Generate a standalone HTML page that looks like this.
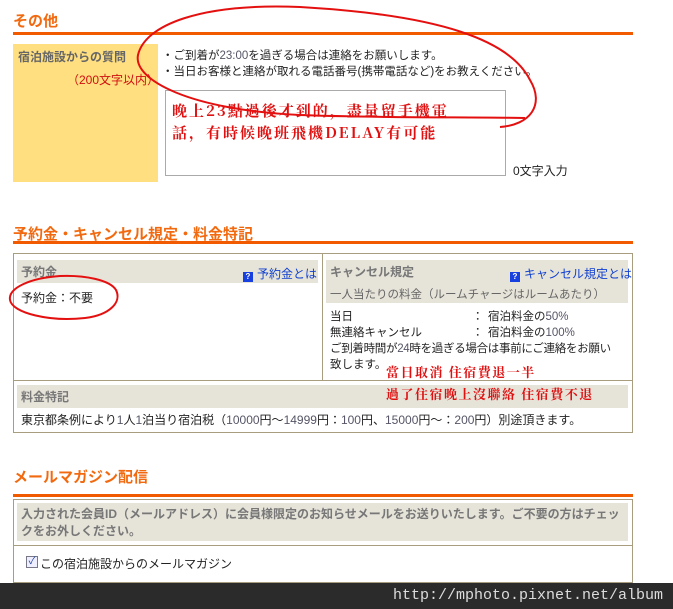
<!DOCTYPE html>
<html><head><meta charset="utf-8"><style>
body{margin:0;width:673px;height:609px;background:#fff;position:relative;overflow:hidden;font-family:"Liberation Sans","Noto Sans CJK JP",sans-serif;font-size:12px;color:#222}
.a{position:absolute}
.t{font-weight:bold;color:#f26a10;font-size:15px}
.ln{height:3px;background:#f25a00;left:13px;width:620px}
.gr{background:#e6e3d9;color:#666;font-weight:bold}
.bl{color:#1040d0}
.nb{color:#556}
.q{display:inline-block;width:10px;height:10px;background:#1840e0;color:#fff;font-size:8px;line-height:10px;text-align:center;font-weight:bold;margin-right:4px;vertical-align:-1px}
.red{color:#e01010;font-family:"Noto Serif CJK SC","Liberation Serif",serif;font-weight:bold}
</style></head><body>
<div class="a t" style="left:13px;top:10px">その他</div>
<div class="a ln" style="top:32px"></div>
<div class="a" style="left:13px;top:44px;width:145px;height:138px;background:#ffdf80"></div>
<div class="a" style="left:18px;top:48px;color:#666;font-weight:bold">宿泊施設からの質問</div>
<div class="a" style="left:67px;top:71px;color:#d01010">（200文字以内）</div>
<div class="a" style="left:162px;top:48px;line-height:16px;font-size:11.5px">・ご到着が<span class="nb">23:00</span>を過ぎる場合は連絡をお願いします。<br>・当日お客様と連絡が取れる電話番号(携帯電話など)をお教えください。</div>
<div class="a" style="left:165px;top:90px;width:339px;height:84px;border:1px solid #aaa"></div>
<div class="a red" style="left:172px;top:100px;font-size:15px;line-height:22px;letter-spacing:2px">晚上23點過後才到的，盡量留手機電<br>話，有時候晚班飛機DELAY有可能</div>
<div class="a" style="left:513px;top:162px">0文字入力</div>

<div class="a t" style="left:13px;top:223px">予約金・キャンセル規定・料金特記</div>
<div class="a ln" style="top:241px"></div>
<div class="a" style="left:13px;top:253px;width:618px;height:178px;border:1px solid #a89d7e"></div>
<div class="a" style="left:322px;top:253px;width:1px;height:127px;background:#a89d7e"></div>
<div class="a" style="left:13px;top:380px;width:620px;height:1px;background:#a89d7e"></div>
<div class="a gr" style="left:17px;top:260px;width:301px;height:23px"></div>
<div class="a" style="left:21px;top:263px;color:#777;font-weight:bold">予約金</div>
<div class="a bl" style="left:243px;top:265px"><span class="q">?</span>予約金とは</div>
<div class="a" style="left:21px;top:289px">予約金：不要</div>
<div class="a gr" style="left:326px;top:260px;width:302px;height:43px"></div>
<div class="a" style="left:330px;top:263px;color:#777;font-weight:bold">キャンセル規定</div>
<div class="a bl" style="left:510px;top:265px"><span class="q">?</span>キャンセル規定とは</div>
<div class="a" style="left:330px;top:286px;color:#666;font-weight:normal;font-size:11.5px">一人当たりの料金（ルームチャージはルームあたり）</div>
<div class="a" style="left:330px;top:309px;line-height:16px;width:300px;font-size:11.5px">当日<span class="a" style="left:142px">：</span><span class="a" style="left:158px;white-space:nowrap">宿泊料金の<span class="nb">50%</span></span><br>無連絡キャンセル<span class="a" style="left:142px;top:16px">：</span><span class="a" style="left:158px;top:16px;white-space:nowrap">宿泊料金の<span class="nb">100%</span></span><br><span style="white-space:nowrap;letter-spacing:-0.3px">ご到着時間が<span class="nb">24</span>時を過ぎる場合は事前にご連絡をお願い</span><br>致します。</div>
<div class="a red" style="left:386px;top:362px;font-size:13px;letter-spacing:1.5px">當日取消 住宿費退一半</div>
<div class="a gr" style="left:17px;top:385px;width:611px;height:23px"></div>
<div class="a" style="left:21px;top:388px;color:#777;font-weight:bold">料金特記</div>
<div class="a red" style="left:386px;top:384px;font-size:13px;letter-spacing:1.5px">過了住宿晚上沒聯絡 住宿費不退</div>
<div class="a" style="left:21px;top:411px">東京都条例により<span class="nb">1</span>人<span class="nb">1</span>泊当り宿泊税（<span class="nb">10000</span>円～<span class="nb">14999</span>円：<span class="nb">100</span>円、<span class="nb">15000</span>円～：<span class="nb">200</span>円）別途頂きます。</div>

<div class="a t" style="left:13px;top:466px">メールマガジン配信</div>
<div class="a ln" style="top:494px"></div>
<div class="a" style="left:13px;top:499px;width:618px;height:82px;border:1px solid #a89d7e"></div>
<div class="a gr" style="left:17px;top:503px;width:611px;height:38px"></div>
<div class="a" style="left:21px;top:506px;color:#777;font-weight:bold;line-height:17px;width:605px">入力された会員ID（メールアドレス）に会員様限定のお知らせメールをお送りいたします。ご不要の方はチェックをお外しください。</div>
<div class="a" style="left:13px;top:545px;width:620px;height:1px;background:#a89d7e"></div>
<div class="a" style="left:26px;top:556px;width:10px;height:10px;border:1px solid #778;background:#eef;color:#2040a0;font-size:10px;line-height:10px;text-align:center">✓</div>
<div class="a" style="left:40px;top:555px">この宿泊施設からのメールマガジン</div>
<div class="a" style="left:0;top:583px;width:673px;height:26px;background:#2b2b2b"></div>
<div class="a" style="right:10px;top:587px;color:#ddd;font-family:'Liberation Mono',monospace;font-size:15px">http://mphoto.pixnet.net/album</div>

<svg class="a" style="left:0;top:0" width="673" height="609">
<g fill="none" stroke="#e41010" stroke-width="2">
<path d="M500,127 C530,125 545,105 530,80 C510,40 440,15 300,7 C200,3 145,25 138,55 C133,80 190,110 300,115 C380,118 460,117 525,118"/>
<path d="M60,276 C30,278 8,288 10,300 C12,313 50,322 85,318 C110,315 122,302 116,290 C110,280 85,275 60,276"/>
</g></svg>
</body></html>
